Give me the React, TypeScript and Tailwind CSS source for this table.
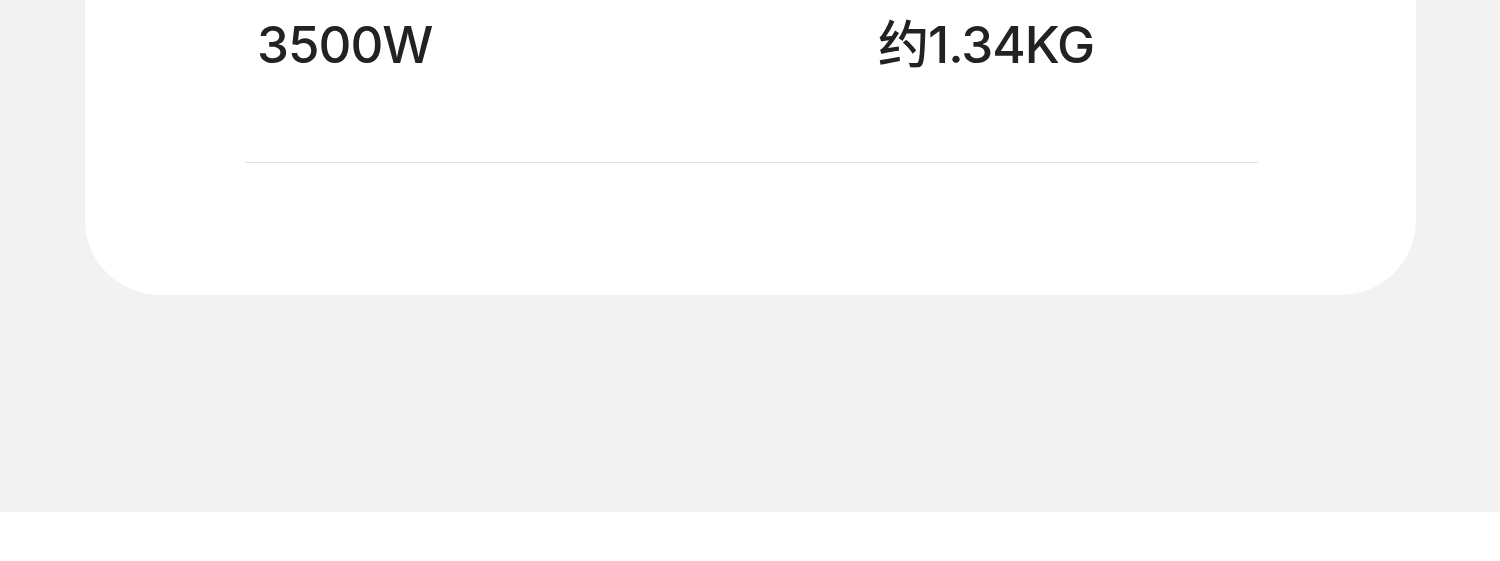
export default function App() {
  return (
    <div className="w-[1500px] min-h-[561px] bg-white" style={{ fontFamily: 'Inter, "Noto Sans CJK SC", sans-serif' }}>
      <div className="bg-[#f2f2f2] h-[512px] pl-[85px] pr-[84px]">
        <div className="bg-white rounded-b-[75px] pl-[160px] pr-[158px] pb-[132px]">
          <div className="flex pl-[12px] h-[162px] pt-[19px] text-[51px] leading-[1] tracking-[-1px] font-medium text-[#222222]">
            <div className="w-[621px]">3500W</div>
            <div>约1.34KG</div>
          </div>
          <div className="h-px bg-[#e0e0e0]" />
        </div>
      </div>
    </div>
  );
}
